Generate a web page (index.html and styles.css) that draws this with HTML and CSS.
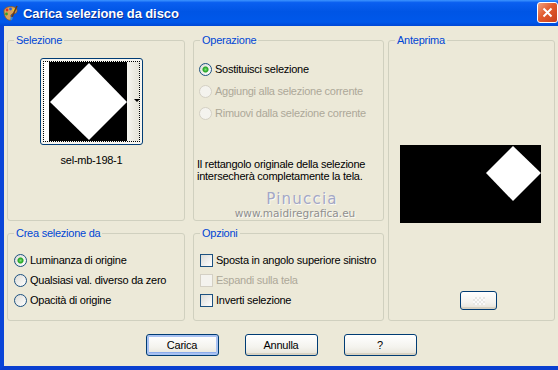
FILE: index.html
```html
<!DOCTYPE html>
<html lang="it">
<head>
  <meta charset="UTF-8" />
  <title>Carica selezione da disco</title>
  <link rel="stylesheet" href="styles.css">
</head>
<body>

  <div class="window">
    <div class="titlebar">
      <svg class="app-icon" width="17" height="17" viewBox="0 0 17 17">
        <path d="M2 6 C2 2 8 1 12 2 C15 3 16 6 14 8 C12 9 10 8 9 10 C8 12 11 13 9 15 C6 16 2 13 2 6 Z" fill="#d9a35b" stroke="#8a5a22" stroke-width="0.8"/>
        <circle cx="5" cy="5" r="1.4" fill="#e03020"/>
        <circle cx="8.5" cy="4" r="1.4" fill="#2a62e0"/>
        <circle cx="12" cy="5" r="1.3" fill="#f2d21a"/>
        <circle cx="4.5" cy="9" r="1.4" fill="#30a030"/>
        <path d="M15 1 L10 12" stroke="#6b3d14" stroke-width="1.6"/>
        <path d="M10 12 L9 15" stroke="#3a8ad8" stroke-width="2"/>
      </svg>
      <span class="title">Carica selezione da disco</span>
      <div class="close-btn">
        <svg width="11" height="11" viewBox="0 0 11 11"><path d="M1.5 1.5 L9.5 9.5 M9.5 1.5 L1.5 9.5" stroke="#fff" stroke-width="2"/></svg>
      </div>
    </div>

    <div class="dialog">
      <div class="groups">

        <fieldset class="group left selezione">
          <legend>Selezione</legend>
          <div class="sel-inner">
            <div class="thumb-col">
              <div class="thumb">
                <div class="thumb-focus">
                  <span class="thumb-pad"></span>
                  <svg width="78" height="79" viewBox="0 0 78 79">
                    <rect width="78" height="79" fill="#000"/>
                    <polygon points="40,1 1,40 40,78 78,40" fill="#fff"/>
                  </svg>
                  <span class="thumb-drop"><span class="arrow"></span></span>
                </div>
              </div>
              <div class="thumb-name">sel-mb-198-1</div>
            </div>
          </div>
        </fieldset>

        <fieldset class="group mid operazione">
          <legend>Operazione</legend>
          <div class="op-inner">
            <label class="opt"><input type="radio" name="op" class="radio" checked> Sostituisci selezione</label>
            <label class="opt disabled"><input type="radio" name="op" class="radio" disabled> Aggiungi alla selezione corrente</label>
            <label class="opt disabled"><input type="radio" name="op" class="radio" disabled> Rimuovi dalla selezione corrente</label>
            <p class="note">Il rettangolo originale della selezione<br>intersecherà completamente la tela.</p>
          </div>
        </fieldset>

        <fieldset class="group anteprima">
          <legend>Anteprima</legend>
          <div class="prev-inner">
            <svg class="preview" width="141" height="78" viewBox="0 0 141 78">
              <rect width="141" height="78" fill="#000"/>
              <polygon points="113,1 86,28 113,56 141,28" fill="#fff"/>
            </svg>
            <button class="btn small-btn"><span class="checker"></span></button>
          </div>
        </fieldset>

        <fieldset class="group left crea">
          <legend>Crea selezione da</legend>
          <div class="list-inner">
            <label class="opt"><input type="radio" name="src" class="radio" checked> Luminanza di origine</label>
            <label class="opt"><input type="radio" name="src" class="radio"> Qualsiasi val. diverso da zero</label>
            <label class="opt"><input type="radio" name="src" class="radio"> Opacità di origine</label>
          </div>
        </fieldset>

        <fieldset class="group mid opzioni">
          <legend>Opzioni</legend>
          <div class="list-inner">
            <label class="opt"><input type="checkbox" class="check"> Sposta in angolo superiore sinistro</label>
            <label class="opt disabled"><input type="checkbox" class="check" disabled> Espandi sulla tela</label>
            <label class="opt"><input type="checkbox" class="check"> Inverti selezione</label>
          </div>
        </fieldset>

      </div>

      <div class="buttons">
        <button class="btn default">Carica</button>
        <button class="btn">Annulla</button>
        <button class="btn">?</button>
      </div>

      <div class="watermark">
        <div class="wm-name">Pinuccia</div>
        <div class="wm-url">www.maidiregrafica.eu</div>
      </div>
    </div>
  </div>

</body>
</html>
```

FILE: styles.css
```css
body {
  margin: 0;
  background-color: #ece9d8;
  font-family: 'Liberation Sans', Arial, sans-serif;
  font-size: 11px;
  letter-spacing: -0.25px;
  color: #000;
}

.window {
  width: 558px;
  height: 370px;
  overflow: hidden;
}

/* title bar */
.titlebar {
  height: 26px;
  display: flex;
  align-items: center;
  padding-left: 2px;
  background: linear-gradient(to bottom, #3d95ff 0%, #0a5ff0 10%, #0055e5 45%, #0058ea 85%, #0048d6 100%);
  box-sizing: border-box;
}

.app-icon {
  flex: none;
}

.title {
  margin-left: 4px;
  color: #fff;
  font-weight: bold;
  font-size: 13px;
  letter-spacing: -0.1px;
  text-shadow: 1px 1px 0 #0a2a8c;
  flex: 1;
}

.close-btn {
  width: 21px;
  height: 21px;
  margin-top: -2px;
  box-sizing: border-box;
  border: 1px solid #fff;
  border-radius: 3px;
  background: linear-gradient(135deg, #f0a080 0%, #e25a2c 45%, #c8401c 100%);
  display: flex;
  align-items: center;
  justify-content: center;
}

/* dialog body */
.dialog {
  position: relative;
  height: 344px;
  box-sizing: border-box;
  border-left: 4px solid #0a45d8;
  border-bottom: 4px solid #0a3fd0;
  padding: 8px 0 0 3px;
}

.groups {
  display: grid;
  grid-template-columns: 186px 195px 167px;
  grid-template-rows: 187px 94px;
  row-gap: 6px;
}

.group {
  margin: 0;
  padding: 0;
  min-width: 0;
  border: 1px solid #d0d0bf;
  border-radius: 3px;
}

.group.left {
  margin-right: 8px;
}

.group.mid {
  margin-right: 4px;
}

.anteprima {
  grid-column: 3;
  grid-row: 1 / 3;
}

legend {
  margin-left: 6px;
  padding: 0 2px;
  color: #0046d5;
  line-height: 13px;
}

/* selezione */
.sel-inner {
  padding: 11px 0 0 32px;
}

.thumb-col {
  display: inline-flex;
  flex-direction: column;
  align-items: center;
}

.thumb {
  width: 103px;
  height: 87px;
  box-sizing: border-box;
  border: 1px solid #003c74;
  border-radius: 3px;
  padding: 2px;
  background: #f6f5f0;
}

.thumb-focus {
  display: flex;
  border: 1px dotted #000;
  height: 81px;
  box-sizing: border-box;
}

.thumb-pad {
  width: 5px;
  background: #fff;
}

.thumb-drop {
  width: 12px;
  background: linear-gradient(to right, #f7f6f1, #e4e2d8);
  position: relative;
}

.arrow {
  position: absolute;
  left: 7px;
  top: 37px;
  border-left: 3px solid transparent;
  border-right: 3px solid transparent;
  border-top: 3px solid #000;
}

.thumb-name {
  margin-top: 9px;
  line-height: 13px;
}

/* options */
.op-inner {
  padding: 11px 0 0 5px;
}

.list-inner {
  padding: 10px 0 0 6px;
}

.opt {
  display: flex;
  align-items: center;
  gap: 3px;
  height: 22px;
  white-space: nowrap;
}

.list-inner .opt {
  height: 20px;
}

.opt.disabled {
  color: #aca899;
}

.radio, .check {
  appearance: none;
  margin: 0;
  width: 13px;
  height: 13px;
  flex: none;
  border: 1px solid #1c5180;
  background: linear-gradient(135deg, #dcdcd7, #fff);
}

.radio {
  border-radius: 50%;
}

.radio:checked {
  background: radial-gradient(circle, #7ee67a 0, #21a121 2.5px, transparent 3.5px), linear-gradient(135deg, #dcdcd7, #fff);
}

.radio:disabled, .check:disabled {
  border-color: #d4d0c4;
  background: #f4f3ee;
}

.check {
  border-radius: 0;
}

.note {
  margin: 34px 0 0 -2px;
  line-height: 12px;
}

/* buttons */
.btn {
  width: 73px;
  height: 22px;
  border: 1px solid #003c74;
  border-radius: 3px;
  background: linear-gradient(to bottom, #ffffff 0%, #f4f3ee 60%, #e6e3d8 100%);
  font-family: 'Liberation Sans', Arial, sans-serif;
  font-size: 11px;
  letter-spacing: -0.25px;
  color: #000;
  box-shadow: inset 0 -2px 0 #d8d2c2;
}

.btn.default {
  box-shadow: inset 0 0 0 2px #a9c2f2, inset 0 -3px 0 #8cacec;
}

.buttons {
  display: flex;
  justify-content: center;
  gap: 26px;
  margin-top: 13px;
  padding-right: 3px;
}

/* preview */
.prev-inner {
  display: flex;
  flex-direction: column;
  align-items: flex-start;
  height: 274px;
  padding-left: 11px;
}

.preview {
  margin-top: 98px;
}

.btn.small-btn {
  margin: auto 0 11px 60px;
  width: 37px;
  height: 19px;
  padding: 0;
  display: flex;
  align-items: center;
  justify-content: center;
}

.checker {
  width: 12px;
  height: 8px;
  background: repeating-conic-gradient(#e8e8e4 0 25%, #fafafa 0 50%) 0 0 / 4px 4px;
}

/* watermark over the dialog */
.watermark {
  position: absolute;
  left: 230px;
  top: 166px;
  width: 122px;
  text-align: center;
  font-family: 'DejaVu Sans', sans-serif;
  letter-spacing: 0;
  pointer-events: none;
}

.wm-name {
  margin-left: 14px;
  font-size: 15px;
  letter-spacing: 1.2px;
  line-height: 14px;
  color: #a3a7c6;
  text-shadow: 1px 1px 0 #fbfaf5;
}

.wm-url {
  margin-top: 1px;
  font-size: 10.5px;
  line-height: 12px;
  color: #8f8f8f;
  text-shadow: 1px 1px 0 #fbfaf5;
}
```
